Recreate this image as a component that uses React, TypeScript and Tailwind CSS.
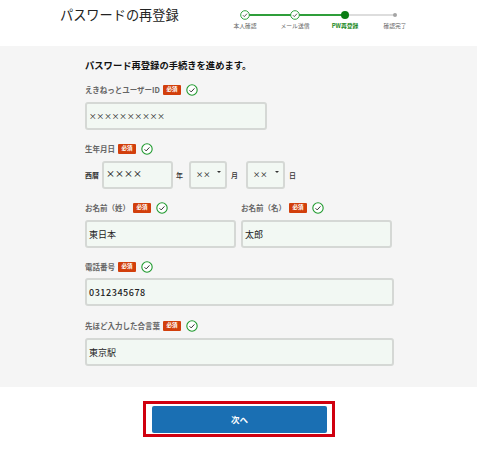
import React from "react";

function Check({ size = 13 }: { size?: number }) {
  return (
    <svg width={size} height={size} viewBox="0 0 22 22" fill="none" className="shrink-0">
      <circle cx="11" cy="11" r="9.5" stroke="#1f9a2e" strokeWidth="2" fill="#fff" />
      <path d="M6.5 11.5l3 3 6-6.5" stroke="#333" strokeWidth="1.8" fill="none" />
    </svg>
  );
}

function Label({ text }: { text: string }) {
  return (
    <div className="flex items-center h-[14px]">
      <span className="text-[7.5px] font-bold text-[#666] leading-none">{text}</span>
      <span className="ml-[3px] w-[18px] h-[10px] rounded-[1px] bg-[#d23f0c] text-white text-[5.5px] font-bold flex items-center justify-center leading-none">必須</span>
      <span className="ml-[5px] flex"><Check size={12} /></span>
    </div>
  );
}

const box = "h-[28px] rounded-[3px] border-2 border-[#d5d8d5] bg-[#f2f8f3] flex items-center pl-[2px] text-[#222] text-[9px] leading-none";

function Step({ label, state }: { label: string; state: "done" | "now" | "todo" }) {
  return (
    <div className="w-[50px] flex flex-col items-center">
      <div className="h-[12px] flex items-center justify-center">
        {state === "done" && <Check size={10} />}
        {state === "now" && <div className="w-[8px] h-[8px] rounded-full bg-[#0a7d14]" />}
        {state === "todo" && <div className="w-[4px] h-[4px] rounded-full bg-[#a5a5a5]" />}
      </div>
      <div className={state === "now" ? "mt-[1px] text-[5.8px] leading-[8px] font-bold text-[#1a8a25] whitespace-nowrap" : "mt-[1px] text-[5.8px] leading-[8px] text-[#666] whitespace-nowrap"}>{label}</div>
    </div>
  );
}

export default function App() {
  return (
    <div className="w-[477px] h-[453px] bg-white overflow-hidden font-['Noto_Sans_CJK_JP','Noto_Sans',sans-serif]">
      <header className="h-[46px] flex items-start pl-[60px]">
        <h1 className="mt-[6px] text-[13.2px] leading-[18px] font-normal text-[#222] w-[160px] whitespace-nowrap">パスワードの再登録</h1>
        <div className="relative mt-[9px] flex">
          <div className="absolute left-[25px] top-[5px] w-[100px] h-[1.5px] bg-[#2f9e3a]" />
          <div className="absolute left-[125px] top-[5px] w-[49px] h-[1.5px] bg-[#dddddd]" />
          <div className="relative flex">
            <Step label="本人確認" state="done" />
            <Step label="メール送信" state="done" />
            <Step label="PW再登録" state="now" />
            <Step label="確認完了" state="todo" />
          </div>
        </div>
      </header>

      <main className="h-[341px] bg-[#f5f5f5] pl-[85px] pt-[12px]">
        <h2 className="text-[9.3px] leading-[14px] font-bold text-[#111]">パスワード再登録の手続きを進めます。</h2>
        <div className="mt-[11px]"><Label text="えきねっとユーザーID" /></div>
        <div className={`${box} mt-[5px] w-[182px] !text-[7.6px]`}>××××××××××</div>

        <div className="mt-[12px]"><Label text="生年月日" /></div>
        <div className="mt-[5px] flex items-center text-[7px] font-medium text-[#333] leading-none">
          <span className="w-[17px] font-bold">西暦</span>
          <div className={`${box} w-[71px] !items-start pt-[6px]`}>××××</div>
          <span className="ml-[3px] w-[13px]">年</span>
          <div className={`${box} w-[38px] !pl-[5px] !text-[7.2px] relative`}>
            ××
            <span className="absolute right-[4px] top-[8px] border-x-[2px] border-t-[2px] border-x-transparent border-t-[#333]" />
          </div>
          <span className="ml-[4px] w-[15px]">月</span>
          <div className={`${box} w-[39px] !pl-[5px] !text-[7.2px] relative`}>
            ××
            <span className="absolute right-[4px] top-[8px] border-x-[2px] border-t-[2px] border-x-transparent border-t-[#333]" />
          </div>
          <span className="ml-[4px]">日</span>
        </div>

        <div className="mt-[12px] flex gap-[5px]">
          <div className="w-[151px]">
            <Label text="お名前（姓）" />
            <div className={`${box} mt-[5px]`}>東日本</div>
          </div>
          <div className="w-[151px]">
            <Label text="お名前（名）" />
            <div className={`${box} mt-[5px]`}>太郎</div>
          </div>
        </div>

        <div className="mt-[12px]"><Label text="電話番号" /></div>
        <div className={`${box} mt-[4px] w-[309px] tracking-[0.55px] font-medium`}>0312345678</div>

        <div className="mt-[13px]"><Label text="先ほど入力した合言葉" /></div>
        <div className={`${box} mt-[5px] w-[309px]`}>東京駅</div>
      </main>

      <div className="flex justify-center pt-[14px]">
        <div className="w-[192px] h-[36px] border-[3px] border-[#d0000f] flex items-center justify-center">
          <button className="ml-[2px] w-[175px] h-[27px] rounded-[2px] bg-[#1a6fb3] text-white text-[8.5px] font-bold leading-none">次へ</button>
        </div>
      </div>
    </div>
  );
}
